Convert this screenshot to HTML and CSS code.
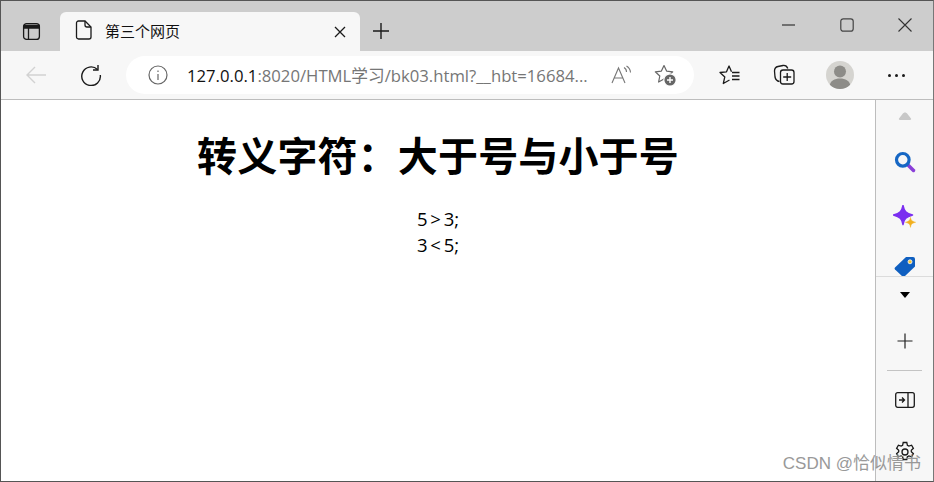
FILE: index.html
```html
<!DOCTYPE html>
<html lang="zh">
<head>
    <meta charset="UTF-8">
    <title>第三个网页</title>
    <link rel="stylesheet" href="styles.css">
</head>
<body>
    <div class="window">
        <div class="tabbar">
            <svg class="tab-actions" width="20" height="20" viewBox="0 0 20 20" fill="none" stroke="#1a1a1a" stroke-width="1.3">
                <rect x="2.6" y="2.6" width="15.8" height="15.8" rx="3"/>
                <path d="M3 4.500h15v2.500H3z" fill="#1a1a1a"/>
                <path d="M7.500 7v11"/>
            </svg>
            <div class="tab">
                <svg class="tab-icon" width="18" height="20" viewBox="0 0 18 20" fill="none" stroke="#1a1a1a" stroke-width="1.3">
                    <path d="M3.500 1h6.500l6 6v10a2 2 0 0 1-2 2H3.500a2 2 0 0 1-2-2V3a2 2 0 0 1 2-2z"/>
                    <path d="M10 1v4a2 2 0 0 0 2 2h4"/>
                </svg>
                <span class="tab-title">第三个网页</span>
                <svg class="tab-close" width="12" height="12" viewBox="0 0 12 12" stroke="#1a1a1a" stroke-width="1.3">
                    <path d="M1 1l10 10M11 1L1 11"/>
                </svg>
            </div>
            <svg class="new-tab" width="18" height="18" viewBox="0 0 18 18" stroke="#1a1a1a" stroke-width="1.4">
                <path d="M9 1v16M1 9h16"/>
            </svg>
            <div class="window-controls">
                <svg width="14" height="14" viewBox="0 0 14 14" stroke="#333" stroke-width="1.2"><path d="M0 7h13"/></svg>
                <svg width="14" height="14" viewBox="0 0 14 14" fill="none" stroke="#444" stroke-width="1.2"><rect x="0.800" y="0.800" width="12.400" height="12.400" rx="2.500"/></svg>
                <svg width="14" height="14" viewBox="0 0 14 14" stroke="#333" stroke-width="1.100"><path d="M0.500 0.500l13 13M13.500 0.500l-13 13"/></svg>
            </div>
        </div>

        <div class="toolbar">
            <svg class="btn-back" width="22" height="20" viewBox="0 0 22 20" fill="none" stroke="#d2d2d2" stroke-width="1.400">
                <path d="M21 10H2M10 2l-8 8 8 8"/>
            </svg>
            <svg class="btn-reload" width="22" height="22" viewBox="0 0 22 22" fill="none" stroke="#1a1a1a" stroke-width="1.400">
                <path d="M17.500 5.500A9.300 9.300 0 1 0 20.300 11"/>
                <path d="M18 1v5h-5"/>
            </svg>
            <div class="address">
                <svg class="info" width="20" height="20" viewBox="0 0 20 20" fill="none" stroke="#666" stroke-width="1.200">
                    <circle cx="10" cy="10" r="9"/>
                    <path d="M10 9v6M10 5.500v1.500"/>
                </svg>
                <span class="url"><span class="host">127.0.0.1</span>:8020/HTML学习/bk03.html?__hbt=16684...</span>
                <svg class="read-aloud" width="22" height="20" viewBox="0 0 22 20" fill="none" stroke="#777" stroke-width="1.100">
                    <path d="M1 18L7.500 3 14 18M3.200 13h8.600"/>
                    <path d="M13 2.500a5 5 0 0 1 2.500 4.500M15.500 1a8 8 0 0 1 4 6.500"/>
                </svg>
                <svg class="fav-add" width="22" height="22" viewBox="0 0 22 22" fill="none" stroke="#666" stroke-width="1.200" stroke-linejoin="round">
                    <path d="M10 1.500l2.600 5.600 6.100.7-4.500 4.200 1.200 6-5.400-3-5.400 3 1.200-6-4.500-4.200 6.100-.7z"/>
                    <circle cx="16" cy="16" r="6.200" fill="#666" stroke="#fff" stroke-width="1.200"/>
                    <path d="M16 13v6M13 16h6" stroke="#fff" stroke-width="1.400"/>
                </svg>
            </div>
            <svg class="tool-fav" width="22" height="20" viewBox="0 0 22 20" fill="none" stroke="#1a1a1a" stroke-width="1.300" stroke-linejoin="round">
                <path d="M12.500 6.800L10 1 7.500 6.800 1 7.500l4.800 4.400L4.300 18.500l6.200-3.500"/>
                <path d="M13 7.500h7.500M13 11h7.500M13 14.500h7.500"/>
            </svg>
            <svg class="tool-collections" width="22" height="22" viewBox="0 0 22 22" fill="none" stroke="#1a1a1a" stroke-width="1.300">
                <path d="M6.500 17.500C4 17 2.500 15.500 2 13L1.500 7c0-2.500 1-4 3.500-4.500L10 1.500c2.500-.3 4 .8 4.800 3"/>
                <rect x="7.500" y="6" width="13.500" height="14" rx="2.500"/>
                <path d="M14.200 9v8M10.200 13h8"/>
            </svg>
            <div class="avatar">
                <svg width="28" height="28" viewBox="0 0 28 28" fill="#8d8c88">
                    <circle cx="14" cy="10.500" r="6"/>
                    <path d="M3.500 25c1-5.500 5-7.500 10.500-7.500S23.500 19.500 24.500 25a14 14 0 0 1-21 0z"/>
                </svg>
            </div>
            <div class="more"><i></i><i></i><i></i></div>
        </div>

        <div class="main">
            <div class="page">
                <h1>转义字符：大于号与小于号</h1>
                <p>5 &gt; 3;<br>3 &lt; 5;</p>
            </div>
            <div class="sidebar">
                <div class="side-top">
                    <svg class="arrow-up" width="14" height="8" viewBox="0 0 14 8">
                        <path d="M7 0.500c1 0 1.800.5 2.500 1.500L13 6.500c.4.700 0 1.500-1 1.500H2c-1 0-1.400-.8-1-1.500L4.500 2C5.200 1 6 .5 7 .5z" fill="#c8c8c8"/>
                    </svg>
                    <svg class="side-search" width="22" height="22" viewBox="0 0 22 22" fill="none">
                        <path d="M13.500 13.500l6 6" stroke="#8a3fd8" stroke-width="3.500" stroke-linecap="round"/>
                        <circle cx="8.800" cy="8.800" r="6.300" stroke="#1667c4" stroke-width="3.200"/>
                    </svg>
                    <svg class="side-spark" width="24" height="24" viewBox="0 0 24 24">
                        <path d="M10 0.500c1 5.500 3 7.800 9.500 9.500-6.500 1.700-8.500 4-9.500 9.500-1-5.500-3-7.800-9.500-9.500C7 8.300 9 6 10 .5z" fill="#7b2ff0" stroke="#7b2ff0" stroke-width="1.500" stroke-linejoin="round"/>
                        <path d="M17.500 12.500c.4 2.800 1.300 3.800 5 4.800-3.700.9-4.600 1.900-5 5-.4-3.100-1.300-4.100-5-5 3.700-1 4.600-2 5-4.800z" fill="#f2b01e" stroke="#f2b01e" stroke-width="0.600"/>
                    </svg>
                    <svg class="side-tag" width="22" height="22" viewBox="0 0 22 22">
                        <path d="M12 1h7a2 2 0 0 1 2 2v7.500L10.500 20.500a1.500 1.500 0 0 1-2 0L1 13.500a1.500 1.500 0 0 1 0-2z" fill="#0f5fc0"/>
                        <circle cx="16" cy="5.800" r="2" fill="#f7c531" stroke="#fff" stroke-width="0.800"/>
                    </svg>
                </div>
                <div class="side-bottom">
                    <div class="arrow-down"></div>
                    <svg class="side-plus" width="16" height="16" viewBox="0 0 16 16" stroke="#222" stroke-width="1.200">
                        <path d="M8 0.500v15M0.500 8h15"/>
                    </svg>
                    <div class="side-rule"></div>
                    <svg class="side-pane" width="20" height="16" viewBox="0 0 20 16" fill="none" stroke="#1a1a1a" stroke-width="1.300">
                        <rect x="0.700" y="0.700" width="18.600" height="14.600" rx="2"/>
                        <path d="M13 1v14"/>
                        <path d="M4 8h5.500M7 5.500L9.500 8 7 10.500"/>
                    </svg>
                    <svg class="side-gear" width="22" height="22" viewBox="0 0 22 22" fill="none" stroke="#1a1a1a" stroke-width="1.300">
                        <circle cx="11" cy="11" r="3"/>
                        <path d="M9.200 1.500h3.600l.6 2.800 1.500.8 2.700-.9 1.800 3.100-2.100 1.900v1.600l2.100 1.900-1.800 3.100-2.700-.9-1.500.8-.6 2.800H9.200l-.6-2.800-1.500-.8-2.700.9-1.800-3.100 2.100-1.900V9.200L2.600 7.300l1.800-3.100 2.700.9 1.500-.8z"/>
                    </svg>
                </div>
            </div>
        </div>
        <div class="watermark">CSDN @恰似情书</div>
    </div>
</body>
</html>
```

FILE: styles.css
```css
* {
    box-sizing: border-box;
}
html, body {
    height: 100%;
    margin: 0;
    overflow: hidden;
}
body {
    font-family: "Open Sans", "Noto Sans CJK SC", sans-serif;
    color: #000;
    background: #fff;
}
svg {
    display: block;
    flex: none;
}
.window {
    position: relative;
    display: flex;
    flex-direction: column;
    height: 100%;
    border: 1px solid #555;
    border-right-color: #777;
}

/* tabs */
.tabbar {
    display: flex;
    align-items: center;
    height: 50px;
    flex: none;
    background: #cdcdcd;
}
.tab-actions {
    margin: 10px 0 0 20px;
}
.tab {
    display: flex;
    align-items: center;
    align-self: flex-end;
    width: 300px;
    height: 39px;
    margin-left: 19px;
    padding: 0 14px 3px 15px;
    background: #f7f7f7;
    border-radius: 6px 6px 0 0;
}
.tab-title {
    margin-left: 12px;
    flex: 1;
    font-size: 15px;
    color: #111;
}
.tab-close {
    margin-top: 3px;
}
.new-tab {
    margin: 10px 0 0 12px;
}
.window-controls {
    display: flex;
    gap: 44px;
    margin-left: auto;
    margin-right: 21px;
    margin-top: -3px;
}

/* address bar */
.toolbar {
    display: flex;
    align-items: center;
    height: 49px;
    flex: none;
    background: #f7f7f7;
    border-bottom: 1px solid #bdbdbd;
}
.btn-back {
    margin-left: 24px;
}
.btn-reload {
    margin-left: 33px;
}
.address {
    display: flex;
    align-items: center;
    width: 568px;
    height: 38px;
    margin-left: 24px;
    padding: 0 18px 0 22px;
    background: #fff;
    border-radius: 19px;
}
.url {
    margin-left: 19px;
    flex: 1;
    font-size: 16.7px;
    color: #767676;
    white-space: nowrap;
}
.host {
    color: #111;
}
.fav-add {
    margin-left: 21px;
}
.tool-fav {
    margin-left: 25px;
}
.tool-collections {
    margin-left: 32px;
}
.avatar {
    display: flex;
    width: 28px;
    height: 28px;
    margin-left: 31px;
    background: #d5d4d0;
    border-radius: 50%;
    overflow: hidden;
}
.more {
    display: flex;
    gap: 4px;
    margin-left: 34px;
}
.more i {
    width: 3px;
    height: 3px;
    background: #1a1a1a;
    border-radius: 50%;
}

/* content */
.main {
    display: flex;
    flex: 1;
    min-height: 0;
}
.page {
    flex: 1;
    text-align: center;
    padding-top: 29px;
}
h1 {
    margin: 0;
    font-size: 40px;
    line-height: 54px;
    font-weight: 700;
    letter-spacing: 0.15px;
}
.page p {
    margin: 23px 0 0;
    font-size: 18.5px;
    line-height: 26px;
    font-family: "Open Sans", sans-serif;
    word-spacing: -2px;
}

/* sidebar */
.sidebar {
    display: flex;
    flex-direction: column;
    width: 58px;
    flex: none;
    background: #f7f7f7;
    border-left: 1px solid #bdbdbd;
}
.side-top {
    display: flex;
    flex-direction: column;
    align-items: center;
    height: 177px;
    padding-top: 12px;
    overflow: hidden;
    border-bottom: 1px solid #dcdcdc;
}
.side-search {
    margin-top: 31px;
}
.side-spark {
    margin-top: 32px;
}
.side-tag {
    margin-top: 27px;
}
.side-bottom {
    position: relative;
    display: flex;
    flex-direction: column;
    align-items: center;
    padding-top: 15px;
}
.arrow-down {
    width: 0;
    height: 0;
    border-left: 5px solid transparent;
    border-right: 5px solid transparent;
    border-top: 6px solid #000;
}
.side-plus {
    margin-top: 35px;
}
.side-rule {
    width: 35px;
    height: 1px;
    margin-top: 21px;
    background: #c4c4c4;
}
.side-pane {
    margin-top: 21px;
}
.side-gear {
    margin-top: 33px;
}

.watermark {
    position: absolute;
    right: 12px;
    bottom: 7px;
    font-size: 17px;
    color: #8e8e8e;
    opacity: 0.9;
    font-family: "Liberation Sans", "Noto Sans CJK SC", sans-serif;
}
```
